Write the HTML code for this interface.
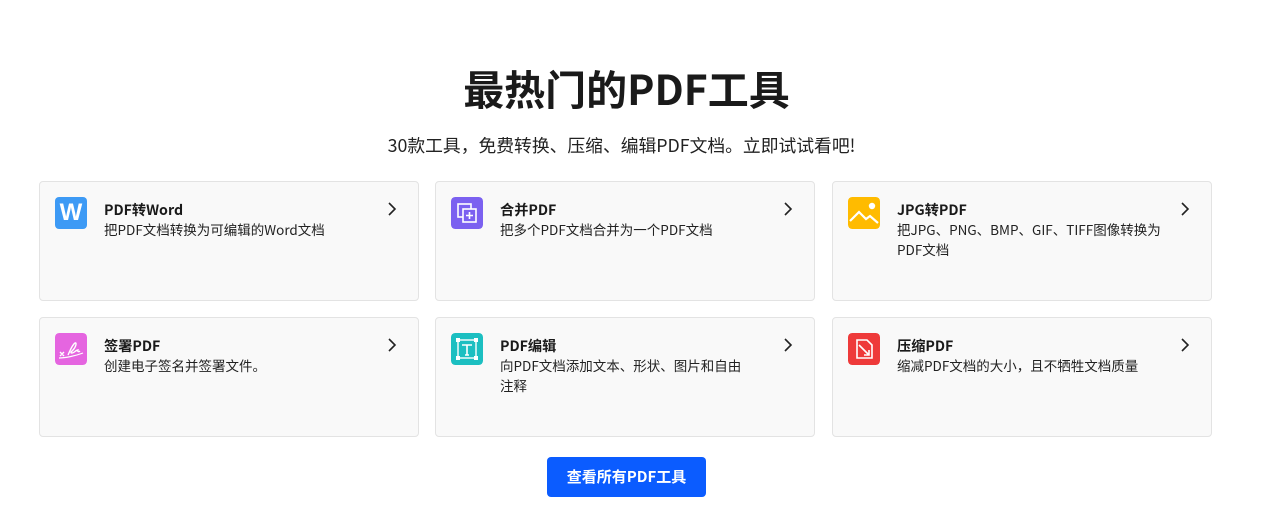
<!DOCTYPE html>
<html><head><meta charset="utf-8"><style>
*{margin:0;padding:0;box-sizing:border-box}
body{width:1267px;height:523px;background:#fff;font-family:"Noto Sans CJK SC",sans-serif;color:#1a1a1a;position:relative;overflow:hidden}
h1{position:absolute;top:58px;left:0;width:1253px;text-align:center;font-size:41px;font-weight:700;line-height:58px}
.sub{position:absolute;top:133px;left:0;width:1243px;text-align:center;font-size:17.8px;line-height:24px;color:#222}
.card{position:absolute;width:380px;height:120px;background:#f9f9f9;border:1px solid #e3e3e3;border-radius:4px}
.ic{position:absolute;left:15px;top:15px;width:32px;height:32px;border-radius:4px}
.t{position:absolute;left:64px;top:17px;font-size:14.2px;font-weight:700;line-height:22px}
.d{position:absolute;left:64px;top:37px;width:262px;font-size:13.5px;line-height:20px;color:#222}
.ch{position:absolute;left:346px;top:19px}
.btn{position:absolute;left:547px;top:457px;width:159px;height:40px;background:#0b5cff;border-radius:4px;color:#fff;font-size:15px;font-weight:700;text-align:center;line-height:40px}
</style></head><body>
<h1>最热门的PDF工具</h1>
<div class="sub">30款工具，免费转换、压缩、编辑PDF文档。立即试试看吧!</div>

<div class="card" style="left:39px;top:181px">
<div class="ic" style="background:#3d9af5;color:#fff;font-weight:700;font-size:24px;text-align:center;line-height:32px;font-family:'Liberation Sans',sans-serif">W</div>
<div class="t">PDF转Word</div><div class="d">把PDF文档转换为可编辑的Word文档</div>
<svg class="ch" width="12" height="16"><path d="M3 2l6 6-6 6" stroke="#222" stroke-width="1.6" fill="none"/></svg></div>

<div class="card" style="left:435px;top:181px">
<svg class="ic" viewBox="0 0 32 32"><rect width="32" height="32" rx="4" fill="#7b61f0"/><rect x="7" y="7" width="13" height="13" fill="none" stroke="#fff" stroke-width="1.6"/><rect x="12" y="12" width="13" height="13" fill="#7b61f0" stroke="#fff" stroke-width="1.6"/><path d="M18.5 15v7M15 18.5h7" stroke="#fff" stroke-width="1.6"/></svg>
<div class="t">合并PDF</div><div class="d">把多个PDF文档合并为一个PDF文档</div>
<svg class="ch" width="12" height="16"><path d="M3 2l6 6-6 6" stroke="#222" stroke-width="1.6" fill="none"/></svg></div>

<div class="card" style="left:832px;top:181px">
<svg class="ic" viewBox="0 0 32 32"><rect width="32" height="32" rx="4" fill="#ffbb00"/><circle cx="24" cy="9" r="3.2" fill="#fff"/><path d="M2 24l9-9 7 7 4-3 8 7" stroke="#fff" stroke-width="2.2" fill="none"/></svg>
<div class="t">JPG转PDF</div><div class="d" style="width:266px">把JPG、PNG、BMP、GIF、TIFF图像转换为PDF文档</div>
<svg class="ch" width="12" height="16"><path d="M3 2l6 6-6 6" stroke="#222" stroke-width="1.6" fill="none"/></svg></div>

<div class="card" style="left:39px;top:317px">
<svg class="ic" viewBox="0 0 32 32"><rect width="32" height="32" rx="4" fill="#e565e0"/><path d="M4 25c6 0 16-2 24-5" stroke="#fff" stroke-width="1.2" fill="none"/><path d="M5 19l4 4M9 19l-4 4M13 22c2-4 4-10 7-12 2-1 1 4-2 7-2 2-3 3-1 3 2 0 4-3 6-3-1 2 1 2 2 1" stroke="#fff" stroke-width="1.4" fill="none"/></svg>
<div class="t">签署PDF</div><div class="d">创建电子签名并签署文件。</div>
<svg class="ch" width="12" height="16"><path d="M3 2l6 6-6 6" stroke="#222" stroke-width="1.6" fill="none"/></svg></div>

<div class="card" style="left:435px;top:317px">
<svg class="ic" viewBox="0 0 32 32"><rect width="32" height="32" rx="4" fill="#1cbfc1"/><rect x="7" y="7" width="18" height="18" fill="none" stroke="#fff" stroke-width="1.4"/><path d="M11 12h10M16 12v10M14 22h4" stroke="#fff" stroke-width="1.6"/><rect x="5" y="5" width="4" height="4" fill="#fff"/><rect x="23" y="5" width="4" height="4" fill="#fff"/><rect x="5" y="23" width="4" height="4" fill="#fff"/><rect x="23" y="23" width="4" height="4" fill="#fff"/></svg>
<div class="t">PDF编辑</div><div class="d" style="width:250px">向PDF文档添加文本、形状、图片和自由注释</div>
<svg class="ch" width="12" height="16"><path d="M3 2l6 6-6 6" stroke="#222" stroke-width="1.6" fill="none"/></svg></div>

<div class="card" style="left:832px;top:317px">
<svg class="ic" viewBox="0 0 32 32"><rect width="32" height="32" rx="4" fill="#ee3a3a"/><path d="M9 7h10l5 5v13H9z" fill="none" stroke="#fff" stroke-width="1.6"/><path d="M11 12l10 10M21 17v5h-5" stroke="#fff" stroke-width="1.6" fill="none"/></svg>
<div class="t">压缩PDF</div><div class="d">缩减PDF文档的大小，且不牺牲文档质量</div>
<svg class="ch" width="12" height="16"><path d="M3 2l6 6-6 6" stroke="#222" stroke-width="1.6" fill="none"/></svg></div>

<div class="btn">查看所有PDF工具</div>
</body></html>
